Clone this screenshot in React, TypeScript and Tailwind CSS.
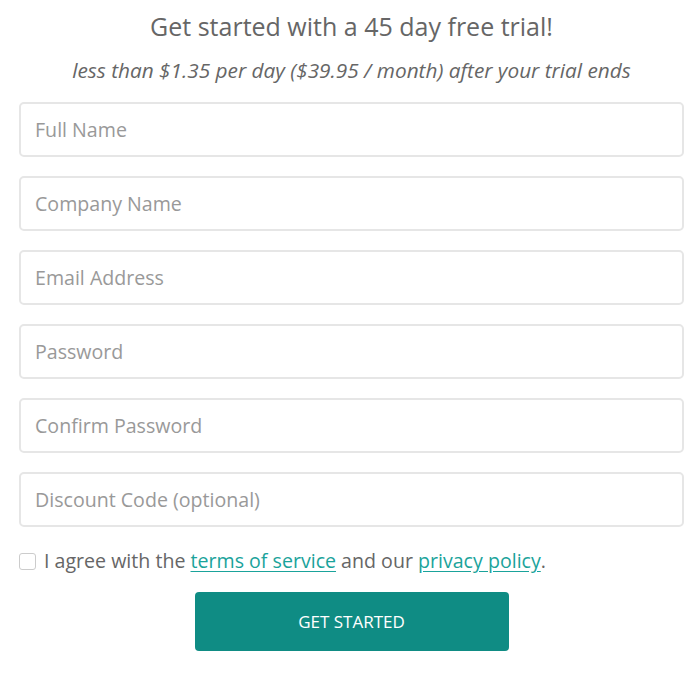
import { useState } from "react";

const fields = [
  "Full Name",
  "Company Name",
  "Email Address",
  "Password",
  "Confirm Password",
  "Discount Code (optional)",
];

export default function App() {
  const [agree, setAgree] = useState(false);

  return (
    <div
      className="w-[700px] h-[686px] bg-white pl-[19px] pr-[16px] pt-[8px]"
      style={{ fontFamily: '"Open Sans", "Noto Sans", sans-serif' }}
    >
      <h1 className="text-center text-[25px] leading-[36px] text-[#666]">
        Get started with a 45 day free trial!
      </h1>
      <p className="mt-[12px] text-center text-[20.8px] leading-[28px] italic text-[#666]">
        less than $1.35 per day ($39.95 / month) after your trial ends
      </p>

      <form className="mt-[18px] flex flex-col gap-[19px]" onSubmit={e => e.preventDefault()}>
        {fields.map(f => (
          <input
            key={f}
            type={f.includes("Password") ? "password" : "text"}
            placeholder={f}
            className="h-[55px] w-full rounded-[5px] border-2 border-[#e6e6e6] px-[14px] text-[19.6px] text-[#555] outline-none placeholder:text-[#999]"
          />
        ))}

        <label className="mt-[1px] flex items-center gap-[8px] text-[19.6px] leading-[28px] text-[#666]">
          <input
            type="checkbox"
            checked={agree}
            onChange={e => setAgree(e.target.checked)}
            className="h-[17px] w-[17px] appearance-none rounded-[3px] border border-[#ccc] bg-white"
          />
          <span>
            I agree with the{" "}
            <a href="#" className="text-[#1aa39b] underline underline-offset-[3px]">terms of service</a>{" "}
            and our{" "}
            <a href="#" className="text-[#1aa39b] underline underline-offset-[3px]">privacy policy</a>.
          </span>
        </label>

        <div className="flex justify-center">
          <button
            type="submit"
            className="-mt-[2px] h-[59px] w-[314px] rounded-[4px] bg-[#0f8c84] text-[17px] uppercase text-white"
          >
            Get Started
          </button>
        </div>
      </form>
    </div>
  );
}
